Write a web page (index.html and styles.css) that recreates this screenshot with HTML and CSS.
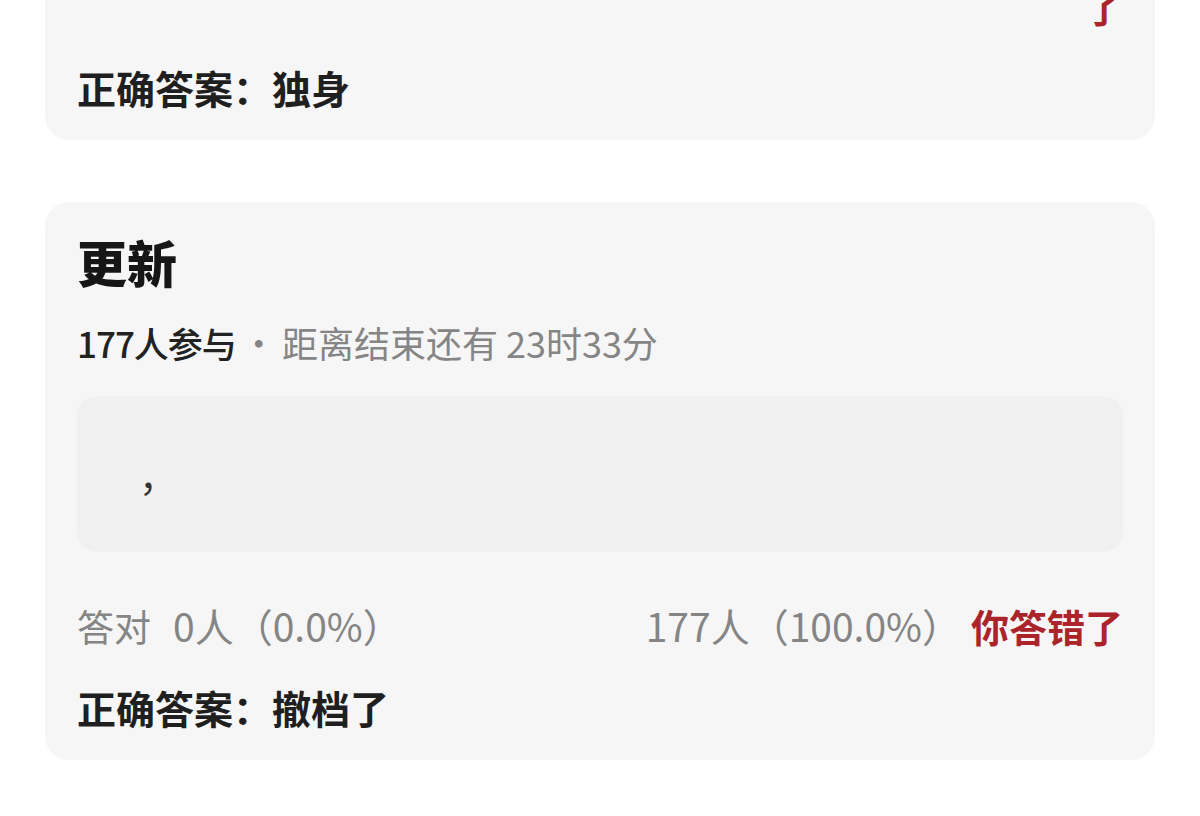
FILE: index.html
```html
<!DOCTYPE html>
<html lang="zh-CN">
<head>
  <meta charset="UTF-8" />
  <meta name="viewport" content="width=device-width, initial-scale=1.0"/>
  <title>竞猜结果</title>
  <link rel="stylesheet" href="styles.css">
</head>
<body>

  <div class="list">

    <div class="card card-cut">
      <div class="stats">
        <span class="stat-left"></span>
        <span class="stat-right"><span class="wrong">了</span></span>
      </div>
      <div class="answer">正确答案：独身</div>
    </div>

    <div class="card">
      <h2 class="title">更新</h2>
      <p class="meta"><span class="count">177人参与</span><span class="dot">·</span>距离结束还有 23时33分</p>
      <div class="question">，</div>
      <div class="stats">
        <span class="stat-left"><span class="label">答对</span>0人（0.0%）</span>
        <span class="stat-right">177人（100.0%）<span class="wrong">你答错了</span></span>
      </div>
      <div class="answer">正确答案：撤档了</div>
    </div>

  </div>

</body>
</html>
```

FILE: styles.css
```css
body {
  margin: 0;
  background: #ffffff;
  font-family: "Noto Sans CJK SC", "Noto Sans", sans-serif;
  color: #1f1f1f;
  overflow: hidden;
}

.list {
  padding: 0 45px;
}

.card {
  background: #f6f6f6;
  border-radius: 24px;
  padding: 28px 32px 29px;
  margin-top: 62px;
}

.card-cut {
  margin-top: -39px;
  padding-top: 20px;
}

.title {
  margin: 0;
  font-size: 50px;
  line-height: 62px;
  font-weight: 900;
  color: #161616;
}

.meta {
  margin: 28px 0 0;
  height: 44px;
  font-size: 36px;
  line-height: 44px;
  color: #858585;
}

.count {
  color: #222;
  font-size: 35px;
  font-weight: 500;
  letter-spacing: -1px;
}

.dot {
  margin: 0 5px;
}

.question {
  margin-top: 32px;
  height: 156px;
  box-sizing: border-box;
  background: #f0f0f0;
  border-radius: 20px;
  padding-left: 62px;
  display: flex;
  align-items: center;
  font-size: 38px;
  color: #333;
}

.stats {
  margin-top: 49px;
  height: 48px;
  display: flex;
  justify-content: space-between;
  align-items: baseline;
  font-size: 39px;
  line-height: 48px;
  color: #858585;
}

.card-cut .stats {
  margin-top: 0;
}

.label {
  margin-right: 22px;
  font-size: 37px;
}

.wrong {
  margin-left: 10px;
  color: #ab242a;
  font-size: 38px;
  font-weight: 700;
}

.answer {
  margin-top: 34px;
  font-size: 39px;
  line-height: 48px;
  font-weight: 700;
}
```
